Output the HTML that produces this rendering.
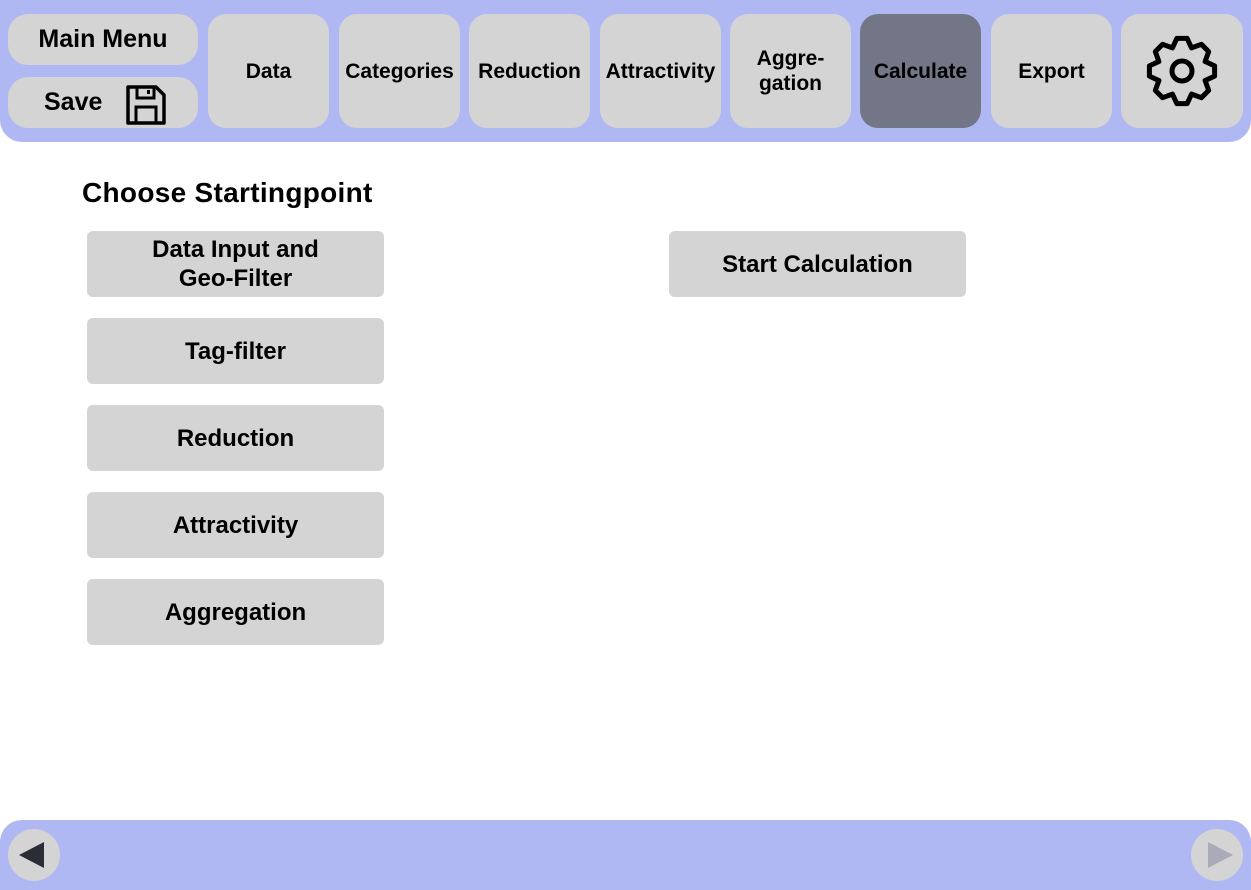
<!DOCTYPE html><html><head><style>
body{margin:0;width:1251px;height:890px;position:relative;background:#fff;font-family:"Liberation Sans",sans-serif;font-weight:bold;overflow:hidden}
.bar{position:absolute;left:0;width:1251px;background:#b0b8f3}
.b{position:absolute;background:#d4d4d4;display:flex;align-items:center;justify-content:center;text-align:center;color:#000}
.n{top:14px;height:114px;width:121px;border-radius:18px;font-size:21px;line-height:25px}
.c{left:87px;width:297px;height:66px;border-radius:6px;font-size:24px;line-height:29px}
</style></head><body>
<div class="bar" style="top:0;height:142px;border-radius:0 0 22px 22px"></div>
<div class="b" style="left:8px;top:14px;width:190px;height:51px;border-radius:20px;font-size:25px">Main Menu</div>
<div class="b" style="left:8px;top:77px;width:190px;height:51px;border-radius:20px;font-size:25px;justify-content:flex-start"><span style="margin-left:36px">Save</span>
<svg style="position:absolute;left:118px;top:8px" width="40" height="40" viewBox="0 0 40 40"><path d="M2 2H30L38 10V38H2Z" fill="none" stroke="#000" stroke-width="3.5" stroke-linejoin="round"/><rect x="11" y="2" width="17" height="11" fill="none" stroke="#000" stroke-width="3"/><rect x="21" y="5" width="3" height="4" fill="#000"/><rect x="10" y="22" width="20" height="16" fill="none" stroke="#000" stroke-width="3"/></svg></div>
<div class="b n" style="left:208px">Data</div>
<div class="b n" style="left:339px">Categories</div>
<div class="b n" style="left:469px">Reduction</div>
<div class="b n" style="left:600px">Attractivity</div>
<div class="b n" style="left:730px">Aggre-<br>gation</div>
<div class="b n" style="left:860px;background:#737687">Calculate</div>
<div class="b n" style="left:991px">Export</div>
<div class="b n" style="left:1121px;width:122px">
<svg width="80" height="80" viewBox="-40 -40 80 80"><path d="M32.6,-5.16 L32.6,5.16 L23.1,9.57 L26.7,19.4 L19.4,26.7 L9.57,23.1 L5.16,32.6 L-5.16,32.6 L-9.57,23.1 L-19.4,26.7 L-26.7,19.4 L-23.1,9.57 L-32.6,5.16 L-32.6,-5.16 L-23.1,-9.57 L-26.7,-19.4 L-19.4,-26.7 L-9.57,-23.1 L-5.16,-32.6 L5.16,-32.6 L9.57,-23.1 L19.4,-26.7 L26.7,-19.4 L23.1,-9.57Z" fill="none" stroke="#000" stroke-width="5" stroke-linejoin="round"/><circle r="10" fill="none" stroke="#000" stroke-width="5"/></svg></div>
<div style="position:absolute;left:82px;top:177px;font-size:28px;letter-spacing:0.3px">Choose Startingpoint</div>
<div class="b c" style="top:231px">Data Input and<br>Geo-Filter</div>
<div class="b c" style="top:318px">Tag-filter</div>
<div class="b c" style="top:405px">Reduction</div>
<div class="b c" style="top:492px">Attractivity</div>
<div class="b c" style="top:579px">Aggregation</div>
<div class="b c" style="left:669px;top:231px">Start Calculation</div>
<div class="bar" style="top:820px;height:70px;border-radius:22px 22px 0 0"></div>
<div class="b" style="left:8px;top:829px;width:52px;height:52px;border-radius:26px"></div>
<svg style="position:absolute;left:0;top:820px" width="1251" height="70"><path d="M44 22V48L19 35Z" fill="#2a2d36"/><path d="M1208 22V48L1233 35Z" fill="#a9abb9"/></svg>
<div class="b" style="left:1191px;top:829px;width:52px;height:52px;border-radius:26px;z-index:-0"></div>
<svg style="position:absolute;left:1191px;top:829px" width="52" height="52"><path d="M17 13V39L42 26Z" fill="#a9abb9"/></svg>
</body></html>
